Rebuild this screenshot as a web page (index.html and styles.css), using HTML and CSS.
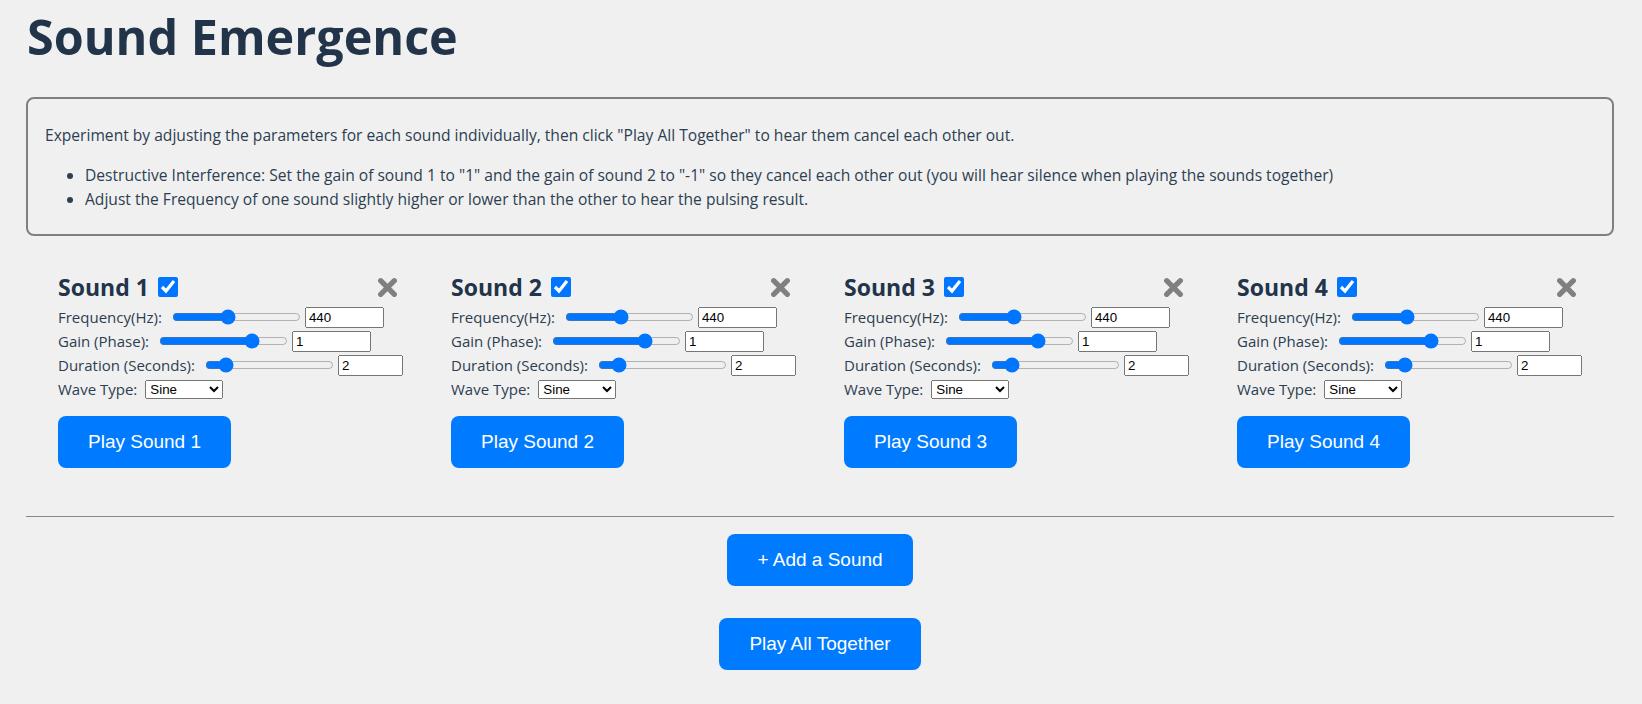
FILE: index.html
```html
<!DOCTYPE html>
<html lang="en">
<head>
<meta charset="utf-8">
<title>Sound Emergence</title>
<link rel="stylesheet" href="styles.css">
</head>
<body>
<main class="page">
  <h1 class="title">Sound Emergence</h1>
  <section class="intro">
    <p>Experiment by adjusting the parameters for each sound individually, then click "Play All Together" to hear them cancel each other out.</p>
    <ul>
      <li>Destructive Interference: Set the gain of sound 1 to "1" and the gain of sound 2 to "-1" so they cancel each other out (you will hear silence when playing the sounds together)</li>
      <li>Adjust the Frequency of one sound slightly higher or lower than the other to hear the pulsing result.</li>
    </ul>
  </section>

  <section class="sounds">
    <div class="sound">
      <div class="sound-head">
        <div class="sound-name"><h2>Sound 1</h2><input type="checkbox" class="enable" checked></div>
        <button class="remove" aria-label="Remove"><svg viewBox="0 0 20 20" width="21" height="21"><path d="M3.5 3.5 L16.5 16.5 M16.5 3.5 L3.5 16.5"/></svg></button>
      </div>
      <div class="row"><label>Frequency(Hz):</label><input type="range" min="20" max="1000" value="440"><input type="number" class="num" value="440"></div>
      <div class="row"><label>Gain (Phase):</label><input type="range" min="-2" max="2" step="0.1" value="1"><input type="number" class="num" value="1"></div>
      <div class="row"><label>Duration (Seconds):</label><input type="range" min="1" max="10" step="0.1" value="2"><input type="number" class="num num-short" value="2"></div>
      <div class="row"><label>Wave Type:</label><select><option>Sine</option><option>Square</option><option>Sawtooth</option><option>Triangle</option></select></div>
      <button class="btn play">Play Sound 1</button>
    </div>
    <div class="sound">
      <div class="sound-head">
        <div class="sound-name"><h2>Sound 2</h2><input type="checkbox" class="enable" checked></div>
        <button class="remove" aria-label="Remove"><svg viewBox="0 0 20 20" width="21" height="21"><path d="M3.5 3.5 L16.5 16.5 M16.5 3.5 L3.5 16.5"/></svg></button>
      </div>
      <div class="row"><label>Frequency(Hz):</label><input type="range" min="20" max="1000" value="440"><input type="number" class="num" value="440"></div>
      <div class="row"><label>Gain (Phase):</label><input type="range" min="-2" max="2" step="0.1" value="1"><input type="number" class="num" value="1"></div>
      <div class="row"><label>Duration (Seconds):</label><input type="range" min="1" max="10" step="0.1" value="2"><input type="number" class="num num-short" value="2"></div>
      <div class="row"><label>Wave Type:</label><select><option>Sine</option><option>Square</option><option>Sawtooth</option><option>Triangle</option></select></div>
      <button class="btn play">Play Sound 2</button>
    </div>
    <div class="sound">
      <div class="sound-head">
        <div class="sound-name"><h2>Sound 3</h2><input type="checkbox" class="enable" checked></div>
        <button class="remove" aria-label="Remove"><svg viewBox="0 0 20 20" width="21" height="21"><path d="M3.5 3.5 L16.5 16.5 M16.5 3.5 L3.5 16.5"/></svg></button>
      </div>
      <div class="row"><label>Frequency(Hz):</label><input type="range" min="20" max="1000" value="440"><input type="number" class="num" value="440"></div>
      <div class="row"><label>Gain (Phase):</label><input type="range" min="-2" max="2" step="0.1" value="1"><input type="number" class="num" value="1"></div>
      <div class="row"><label>Duration (Seconds):</label><input type="range" min="1" max="10" step="0.1" value="2"><input type="number" class="num num-short" value="2"></div>
      <div class="row"><label>Wave Type:</label><select><option>Sine</option><option>Square</option><option>Sawtooth</option><option>Triangle</option></select></div>
      <button class="btn play">Play Sound 3</button>
    </div>
    <div class="sound">
      <div class="sound-head">
        <div class="sound-name"><h2>Sound 4</h2><input type="checkbox" class="enable" checked></div>
        <button class="remove" aria-label="Remove"><svg viewBox="0 0 20 20" width="21" height="21"><path d="M3.5 3.5 L16.5 16.5 M16.5 3.5 L3.5 16.5"/></svg></button>
      </div>
      <div class="row"><label>Frequency(Hz):</label><input type="range" min="20" max="1000" value="440"><input type="number" class="num" value="440"></div>
      <div class="row"><label>Gain (Phase):</label><input type="range" min="-2" max="2" step="0.1" value="1"><input type="number" class="num" value="1"></div>
      <div class="row"><label>Duration (Seconds):</label><input type="range" min="1" max="10" step="0.1" value="2"><input type="number" class="num num-short" value="2"></div>
      <div class="row"><label>Wave Type:</label><select><option>Sine</option><option>Square</option><option>Sawtooth</option><option>Triangle</option></select></div>
      <button class="btn play">Play Sound 4</button>
    </div>
  </section>

  <hr class="divider">

  <div class="actions">
    <button class="btn">+ Add a Sound</button>
    <button class="btn">Play All Together</button>
  </div>
</main>
</body>
</html>
```
FILE: styles.css
```css
html, body {
  margin: 0;
  padding: 0;
  background: #f0f0f0;
}

body {
  font-family: "Open Sans", "Noto Sans", sans-serif;
  color: #2c3e50;
}

.page {
  padding: 0 28px 0 26px;
}

.title {
  margin: 6px 0 0 1px;
  font-size: 48.5px;
  line-height: 60px;
  font-weight: 700;
  color: #22344a;
}

.intro {
  margin-top: 31px;
  border: 2px solid #808080;
  border-radius: 8px;
  padding: 8px 16px 7px 17px;
  font-size: 15.6px;
  line-height: 24px;
  color: #2c3e50;
}

.intro p {
  margin: 16px 0;
}

.intro ul {
  margin: 16px 0;
  padding-left: 40px;
}

.sounds {
  display: grid;
  grid-template-columns: repeat(4, minmax(0, 1fr));
  padding: 36px 8px 0;
}

.sound {
  min-width: 0;
  padding: 0 29px 0 24px;
  display: flex;
  flex-direction: column;
  align-items: flex-start;
}

.sound-head {
  align-self: stretch;
  height: 30px;
  display: flex;
  align-items: center;
  justify-content: space-between;
  margin-bottom: 3px;
}

.sound-name {
  display: flex;
  align-items: center;
}

.sound-name h2 {
  margin: 0;
  font-size: 23px;
  line-height: 30px;
  font-weight: 700;
  color: #22344a;
}

.enable {
  width: 20px;
  height: 20px;
  margin: 0 0 0 9px;
}

.remove {
  border: 0;
  padding: 0;
  background: none;
  display: flex;
  cursor: pointer;
}

.remove svg path {
  fill: none;
  stroke: #808080;
  stroke-width: 5;
  stroke-linecap: round;
}

.row {
  height: 24px;
  display: flex;
  align-items: center;
  font-size: 15px;
  white-space: nowrap;
}

.row label {
  margin-right: 8px;
}

.row input[type="range"] {
  margin: 0 2px;
  flex: none;
}

.num {
  flex: none;
  box-sizing: border-box;
  width: 79px;
  height: 21px;
  margin-left: 2px;
  font-family: "Liberation Sans", Arial, sans-serif;
  font-size: 13.33px;
  -moz-appearance: textfield;
}

.num-short {
  width: 65px;
}

.num::-webkit-inner-spin-button,
.num::-webkit-outer-spin-button {
  -webkit-appearance: none;
  margin: 0;
}

.row select {
  font-family: "Liberation Sans", Arial, sans-serif;
  font-size: 13.33px;
  margin-left: 0;
}

.btn {
  border: 0;
  border-radius: 8px;
  background: #007bff;
  color: #fff;
  font-family: "Liberation Sans", Arial, sans-serif;
  font-size: 19px;
  line-height: 22px;
  padding: 15px 30px;
  cursor: pointer;
}

.play {
  margin-top: 15px;
}

.divider {
  margin: 48px 0 0;
  border: 0;
  border-top: 1px solid #888;
  height: 0;
}

.actions {
  display: flex;
  flex-direction: column;
  align-items: center;
  gap: 32px;
  margin-top: 17px;
}
```
